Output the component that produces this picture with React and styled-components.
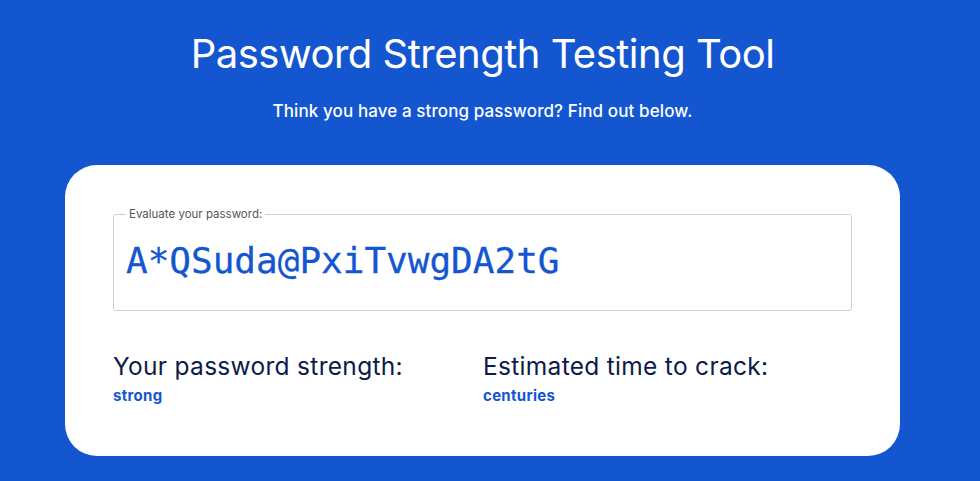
import React from "react";
import styled, { createGlobalStyle } from "styled-components";

const Global = createGlobalStyle`
  html, body { margin: 0; padding: 0; background: #1456cf; }
  body { font-family: Inter, "Noto Sans", sans-serif; }
`;

const Page = styled.div`
  width: 965px;
  min-height: 481px;
  background: #1456cf;
  display: flex;
  flex-direction: column;
  align-items: center;
  padding-top: 28px;
  box-sizing: border-box;
`;

const Title = styled.h1`
  margin: 0;
  color: #fff;
  font-family: Inter, sans-serif;
  font-weight: 400;
  font-size: 40px;
  line-height: 52px;
  letter-spacing: -0.5px;
`;

const Subtitle = styled.p`
  margin: 21px 0 0;
  color: #fff;
  font-size: 17px;
  font-weight: 500;
  line-height: 21px;
  letter-spacing: 0.1px;
`;

const Card = styled.section`
  margin-top: 43px;
  width: 835px;
  box-sizing: border-box;
  background: #fff;
  border-radius: 32px;
  padding: 42px 48px 51px;
`;

const Field = styled.fieldset`
  margin: 0;
  border: 1px solid #cfcfcf;
  border-radius: 3px;
  padding: 19px 12px 0;
  height: 104px;
  box-sizing: border-box;
`;

const Legend = styled.legend`
  padding: 0 3px;
  margin-left: 0;
  font-size: 11.5px;
  color: #555;
`;

const Input = styled.input`
  border: none;
  outline: none;
  width: 100%;
  padding: 0;
  font-family: "DejaVu Sans Mono", monospace;
  font-size: 36px;
  color: #1456cf;
  background: transparent;
  -webkit-text-stroke: 0.3px #1456cf;
`;

const Stats = styled.div`
  display: grid;
  grid-template-columns: 370px 1fr;
  margin-top: 40px;
`;

const Stat = styled.div`
  display: flex;
  flex-direction: column;
`;

const Label = styled.div`
  font-size: 24.5px;
  color: #0d1b4b;
  line-height: 30px;
  letter-spacing: 0.3px;
`;

const Value = styled.div`
  margin-top: 5px;
  font-size: 15px;
  font-weight: 700;
  color: #1456cf;
  letter-spacing: 0.3px;
`;

export default function App() {
  return (
    <>
      <Global />
      <Page>
        <Title>Password Strength Testing Tool</Title>
        <Subtitle>Think you have a strong password? Find out below.</Subtitle>
        <Card>
          <Field>
            <Legend>Evaluate your password:</Legend>
            <Input defaultValue="A*QSuda@PxiTvwgDA2tG" readOnly />
          </Field>
          <Stats>
            <Stat>
              <Label>Your password strength:</Label>
              <Value>strong</Value>
            </Stat>
            <Stat>
              <Label>Estimated time to crack:</Label>
              <Value>centuries</Value>
            </Stat>
          </Stats>
        </Card>
      </Page>
    </>
  );
}
